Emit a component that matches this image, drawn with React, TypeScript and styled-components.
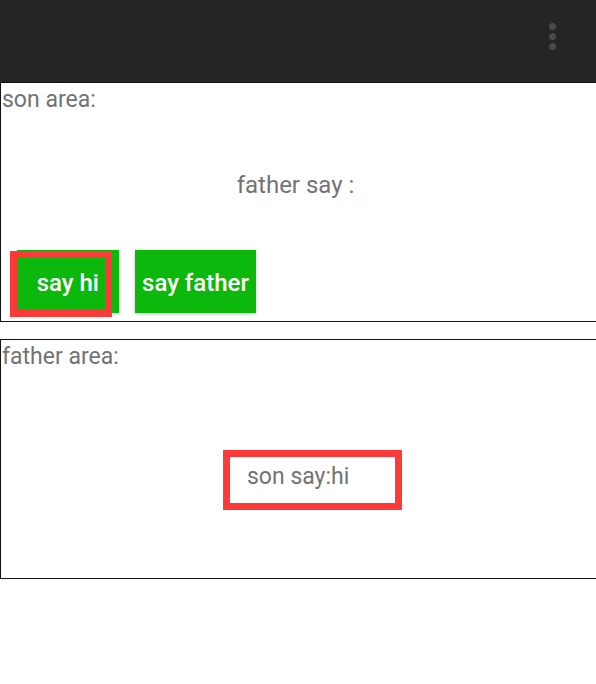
import type { FC } from 'react'
import styled, { createGlobalStyle } from 'styled-components'

const GlobalStyle = createGlobalStyle`
	html, body {
		margin: 0;
		padding: 0;
		background: #ffffff;
		overflow: hidden;
	}
	body {
		font-family: Roboto, 'Liberation Sans', sans-serif;
	}
`

const App: FC = () => {
	return (
		<>
			<GlobalStyle />
			<Page>
				<TopBar>
					<MenuDots aria-label="more options">
						<Dot />
						<Dot />
						<Dot />
					</MenuDots>
				</TopBar>
				<Panel>
					<Label>son area:</Label>
					<Message>father say :</Message>
					<Buttons>
						<Button marked>say hi</Button>
						<Button>say father</Button>
					</Buttons>
				</Panel>
				<Gap />
				<Panel>
					<Label>father area:</Label>
					<Reply>son say:hi</Reply>
				</Panel>
			</Page>
		</>
	)
}

export default App

const Page = styled.div`
	display: flex;
	flex-direction: column;
	width: 596px;
	height: 684px;
	background: #ffffff;
`

const TopBar = styled.header`
	display: flex;
	justify-content: flex-end;
	align-items: center;
	height: 82px;
	background: #252525;
	padding-right: 40px;
	box-sizing: border-box;
`

const MenuDots = styled.div`
	display: flex;
	flex-direction: column;
	gap: 3px;
	margin-top: -10px;
`

const Dot = styled.span`
	width: 7px;
	height: 7px;
	border-radius: 50%;
	background: #4a4a4a;
`

const Panel = styled.section`
	display: flex;
	flex-direction: column;
	height: 240px;
	box-sizing: border-box;
	border: 1px solid #111111;
	border-right: none;
`

const Gap = styled.div`
	height: 17px;
`

const Label = styled.div`
	font-size: 23px;
	line-height: 28px;
	color: #737373;
	padding: 3px 0 0 1px;
`

const Message = styled.div`
	align-self: center;
	margin-top: 57px;
	margin-left: -6px;
	font-size: 24px;
	line-height: 28px;
	color: #737373;
`

const Buttons = styled.div`
	display: flex;
	gap: 16px;
	margin-top: 51px;
	padding-left: 16px;
`

const Button = styled.button<{ marked?: boolean }>`
	position: relative;
	width: ${({ marked }) => (marked ? '102px' : '121px')};
	height: 63px;
	border: none;
	padding: 3px 0 0;
	background: #0bb80b;
	color: #ffffff;
	font-family: Roboto, 'Liberation Sans', sans-serif;
	font-size: 24px;
	font-weight: 500;
	box-shadow: 0 1px 3px rgba(0, 0, 0, 0.25);
	text-align: ${({ marked }) => (marked ? 'right' : 'center')};
	padding-right: ${({ marked }) => (marked ? '20px' : '0')};

	${({ marked }) =>
		marked &&
		`
		&::after {
			content: '';
			position: absolute;
			left: -7px;
			top: 1px;
			width: 102px;
			height: 66px;
			box-sizing: border-box;
			border: 7px solid #fc3a3a;
		}
	`}
`

const Reply = styled.div`
	align-self: center;
	margin-top: 79px;
	margin-left: 28px;
	width: 179px;
	height: 60px;
	box-sizing: border-box;
	border: 7px solid #fc3a3a;
	padding: 6px 0 0 17px;
	font-size: 23px;
	line-height: 28px;
	color: #737373;
`
